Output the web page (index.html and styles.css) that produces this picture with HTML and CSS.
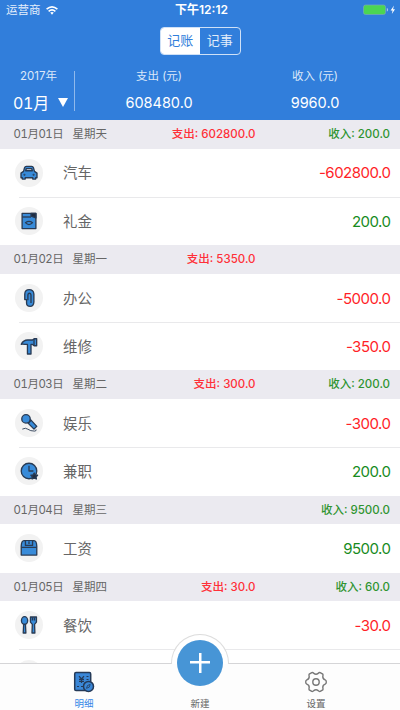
FILE: index.html
```html
<!DOCTYPE html>
<html lang="zh-CN">
<head>
<meta charset="utf-8">
<title>记账</title>
<link rel="stylesheet" href="styles.css">
</head>
<body>
<div class="app">
  <header class="top">
    <div class="status">
      <div class="carrier">运营商
        <svg width="12" height="9" viewBox="0 0 12 9" fill="none" stroke="#fff" stroke-width="1.6"><path d="M.6 3.2Q6-1.4 11.4 3.2M2.6 5.3Q6 2.4 9.4 5.3"/><path d="M4.2 6.6Q6 5.2 7.8 6.6L6 8.8Z" fill="#fff" stroke="none"/></svg>
      </div>
      <div class="clock">下午12:12</div>
      <div class="power">
        <svg width="34" height="12" viewBox="0 0 34 12"><rect x=".5" y="1" width="22" height="9.5" rx="2" fill="#4bd552" stroke="#78a9b7" stroke-width=".7"/><path d="M23.8 4v3.5q1.3-.4 1.3-1.8T23.8 4Z" fill="#a9c9ed"/><path d="M31 1.6 27.6 6.4h2L28.8 10 32 5.2h-2Z" fill="#fff"/></svg>
      </div>
    </div>
    <div class="segment"><span class="seg on">记账</span><span class="seg">记事</span></div>
    <div class="summary">
      <div class="month"><small>2017年</small><div class="pick">01月<i class="caret"></i></div></div>
      <div class="total"><small>支出 (元)</small><b>608480.0</b></div>
      <div class="total income"><small>收入 (元)</small><b>9960.0</b></div>
    </div>
  </header>

  <main class="list">
    <div class="day"><span class="date">01月01日</span><span>星期天</span><span class="out">支出: 602800.0</span><span class="in">收入: 200.0</span></div>
    <div class="row"><span class="icon"><svg viewBox="0 0 18 18"><path d="M4.1 7.5 5 4.2Q5.4 3 6.6 3h4.8q1.2 0 1.6 1.2l.9 3.3 2.3 1.6v4.2h-1.2v1.2h-2.6v-1.2H5.6v1.2H3v-1.2H1.8V9.1Z"/><path class="pale" d="M6 7 6.6 5h4.8L12 7Z"/><circle class="ink" cx="4.9" cy="10.5" r=".3"/><circle class="ink" cx="13.1" cy="10.5" r=".3"/></svg></span><span class="name">汽车</span><span class="sum neg">-602800.0</span></div>
    <div class="row"><span class="icon"><svg viewBox="0 0 18 18"><path d="M2.8 2.2h12.4v13.6H2.8Z"/><path class="ink" d="M10.8 2.2h4.4v4l-4.4-1.6Z"/><path d="M2.8 5.4h8"/><path d="M5.8 10.5Q9 8.2 12.2 10.5 9 14 5.8 10.5Z"/></svg></span><span class="name">礼金</span><span class="sum pos">200.0</span></div>

    <div class="day"><span class="date">01月02日</span><span>星期一</span><span class="out">支出: 5350.0</span></div>
    <div class="row"><span class="icon"><svg viewBox="0 0 18 18"><path d="M5.2 5.4Q5.4 1.5 9.2 1.5T13.4 5.4v7.2Q13.2 16.5 10 16.5T6.8 13.5V10.4H5.2Z"/><path d="M8 11V6.2q.2-1.5 1.4-1.5t1.4 1.5v7.3"/></svg></span><span class="name">办公</span><span class="sum neg">-5000.0</span></div>
    <div class="row"><span class="icon"><svg viewBox="0 0 18 18"><path d="M2 7.4Q4 3.5 8 3.6h4.2l1.4-1.1h2.3v6.3h-2.3l-1.4-1.2h-1.4v8.6H7.6V7.6H5.4Q4 7.2 2 7.4Z"/><path d="M13.5 2.6v6"/></svg></span><span class="name">维修</span><span class="sum neg">-350.0</span></div>

    <div class="day"><span class="date">01月03日</span><span>星期二</span><span class="out">支出: 300.0</span><span class="in">收入: 200.0</span></div>
    <div class="row"><span class="icon"><svg viewBox="0 0 18 18"><path d="M7.9 8.9 10.4 6 16 12l-2.5 2.5Z"/><circle cx="6.3" cy="5.3" r="3.8"/><path d="M8.2 9.5 11 6.4"/><path class="line" d="M3 14.5q3-1.6 5 .1t6.2 1.7q1.7-.3 1.2-1.5"/></svg></span><span class="name">娱乐</span><span class="sum neg">-300.0</span></div>
    <div class="row"><span class="icon"><svg viewBox="0 0 18 18"><circle cx="9" cy="9" r="7"/><path d="M9 4.3V9h4"/><path class="ink" d="m13.7 10.8 1 1.7 2 .3-1.3 1.4.2 2-1.9-.8-1.9.8.2-2-1.3-1.4 2-.3Z"/></svg></span><span class="name">兼职</span><span class="sum pos">200.0</span></div>

    <div class="day"><span class="date">01月04日</span><span>星期三</span><span class="in">收入: 9500.0</span></div>
    <div class="row"><span class="icon"><svg viewBox="0 0 18 18"><path d="M2 7.5Q2.2 2.4 4.5 2.4h9Q15.8 2.4 16 7.5v7.9H2Z"/><path d="M2 8.5h14M5.8 2.6v4.1h6.4V2.6"/><path d="M9 3v2.4"/></svg></span><span class="name">工资</span><span class="sum pos">9500.0</span></div>

    <div class="day"><span class="date">01月05日</span><span>星期四</span><span class="out">支出: 30.0</span><span class="in">收入: 60.0</span></div>
    <div class="row"><span class="icon"><svg viewBox="0 0 18 18"><ellipse cx="5" cy="5" rx="2.8" ry="3.5"/><path d="M4.2 8.4h1.6l.4 7.8H3.8Z"/><path d="M10.3 1.8h5.4v4.6L14 8.4l.3 7.8h-2.6l.3-7.8-1.7-2Z"/><path d="M12.1 2v3M13.9 2v3"/></svg></span><span class="name">餐饮</span><span class="sum neg">-30.0</span></div>
    <div class="row"><span class="icon"></span></div>
  </main>

  <nav class="tabs">
    <div class="tab active">
      <svg width="22" height="22" viewBox="0 0 22 22" fill="#3a87d8" stroke="#253a58" stroke-width="1.5"><rect x="1.7" y="1.6" width="16" height="17.9" rx="1.3"/><path d="M6 5.2 8.5 8 11 5.2M8.5 8v4M6 8.4h5M6 10.3h5M4 15.5h2M8 15.5h2M13.5 5.5h2M13.5 8.5h2" fill="none" stroke-width="1.2"/><circle cx="15.5" cy="15.4" r="5"/><path d="m13.5 17.3 1-2.8 2.7-1.1-1 2.8Z" stroke-width=".8"/></svg>
      <span>明细</span>
    </div>
    <div class="tab add"><div class="ring"><div class="plus"></div></div><span>新建</span></div>
    <div class="tab">
      <svg width="22" height="22" viewBox="0 0 22 22" fill="none" stroke="#777" stroke-width="1.4" stroke-linejoin="round"><path d="M6.8 1.6Q8 1.3 8.8 2.4 11 4 13.2 2.4 14 1.3 15.2 1.6L17.8 3.1Q18.3 4 17.8 5.2 17.6 7.9 20.2 8.8 21.3 9.2 21.3 11T20.2 13.2Q17.6 14.1 17.8 16.8 18.3 18 17.8 18.9L15.2 20.4Q14 20.7 13.2 19.6 11 18 8.8 19.6 8 20.7 6.8 20.4L4.2 18.9Q3.7 18 4.2 16.8 4.4 14.1 1.8 13.2.7 12.8.7 11T1.8 8.8Q4.4 7.9 4.2 5.2 3.7 4 4.2 3.1Z"/><circle cx="11" cy="11" r="3.2"/></svg>
      <span>设置</span>
    </div>
  </nav>
</div>
</body>
</html>
```
FILE: styles.css
```css
* { box-sizing: border-box; }
body { margin: 0; font-family: Inter, "Noto Sans CJK SC", sans-serif; color: #666; }
.app { width: 400px; height: 710px; overflow: hidden; display: flex; flex-direction: column; background: #fff; }

.top { flex: none; height: 120px; background: #317edb; color: #fff; display: flex; flex-direction: column; align-items: center; }
.status { width: 100%; height: 20px; padding: 0 3px 0 6px; display: grid; grid-template-columns: 1fr auto 1fr; align-items: center; font-size: 11.5px; line-height: 20px; }
.carrier { display: flex; align-items: center; gap: 5px; color: #e4effb; }
.clock { font-weight: 600; font-size: 12px; }
.power { display: flex; justify-content: flex-end; }
.segment { display: flex; width: 81px; height: 28px; margin-top: 6.5px; border: 1px solid #cfe1f7; border-radius: 4px; overflow: hidden; }
.seg { flex: 1; text-align: center; font-size: 13px; line-height: 25px; color: #e2edfa; }
.seg.on { background: #fff; color: #317edb; }
.summary { width: 100%; margin-top: 14px; display: flex; }
.summary small { display: block; font-size: 11.5px; line-height: 15px; color: #dbe8f9; }
.month { width: 74.5px; height: 40px; margin-top: 2px; padding-left: 13px; border-right: 1px solid #8fb9ec; }
.month small { padding-left: 7px; margin-top: -2px; }
.pick { display: flex; align-items: center; font-size: 16px; line-height: 22px; margin-top: 8px; letter-spacing: -.3px; font-variant-numeric: tabular-nums; }
.caret { margin-left: 9.5px; border: 5.5px solid transparent; border-top: 9px solid #fff; border-bottom: 0; }
.total { width: 169px; text-align: center; }
.total b { display: block; font-weight: 400; font-size: 14.5px; line-height: 20px; margin-top: 9px; }
.income { width: 143px; }

.list { flex: none; height: 542.5px; overflow: hidden; }
.day { display: grid; grid-template-columns: 59px 90px 93px 1fr; height: 28.8px; padding: 0 10px 0 13.5px; background: #ebeaf0; font-size: 11.5px; line-height: 29.6px; white-space: nowrap; }
.date { font-size: 11.4px; letter-spacing: -.42px; font-variant-numeric: tabular-nums; }
.out { grid-column: 3; text-align: right; color: #ff3038; font-weight: 500; }
.in { grid-column: 4; text-align: right; color: #2f9430; font-weight: 500; }
.row { display: flex; align-items: center; height: 48.2px; padding: 0 10px 0 15px; }
.row + .row { background: linear-gradient(#e9e9eb, #e9e9eb) 19px 0 / 381px 1px no-repeat; }
.icon { flex: none; width: 28px; height: 28px; border-radius: 50%; background: #f2f2f2; display: flex; align-items: center; justify-content: center; }
.icon svg { width: 20px; height: 20px; fill: #388bd9; stroke: #293b54; stroke-width: 1.2; stroke-linejoin: round; }
.icon .pale { fill: #d9dfe7; }
.icon .ink { fill: #202d43; }
.icon .line { fill: none; stroke-width: .8; }
.name { margin-left: 20px; font-size: 14.4px; line-height: 22px; padding-top: 1px; }
.sum { margin-left: auto; font-size: 15px; letter-spacing: -.5px; margin-right: -.5px; }
.neg { color: #ff1f28; }
.pos { color: #188b1d; }

.tabs { flex: none; height: 47.5px; border-top: 1px solid #d5d5d7; background: #fdfdfd; display: flex; padding: 0 26px; position: relative; }
.tab { flex: 1; display: flex; flex-direction: column; align-items: center; padding-top: 7px; font-size: 9.5px; line-height: 14px; }
.tab svg { flex: none; margin-bottom: 4px; }
.active { color: #3688e7; }
.add { position: relative; justify-content: flex-end; }
.add span { margin-bottom: -.5px; }
.ring { position: absolute; top: -30px; left: 50%; width: 58px; height: 58px; margin-left: -29px; border-radius: 50%; background: linear-gradient(#fff 29px, #fdfdfd 29px) padding-box, linear-gradient(#dcdcdc 30px, #fdfdfd 30px) border-box; border: 1px solid transparent; display: flex; align-items: center; justify-content: center; }
.plus { width: 46px; height: 46px; border-radius: 50%; background: linear-gradient(#fff, #fff) center / 20px 2.5px no-repeat, linear-gradient(#fff, #fff) center / 2.5px 20px no-repeat, #4795d6; }
```
